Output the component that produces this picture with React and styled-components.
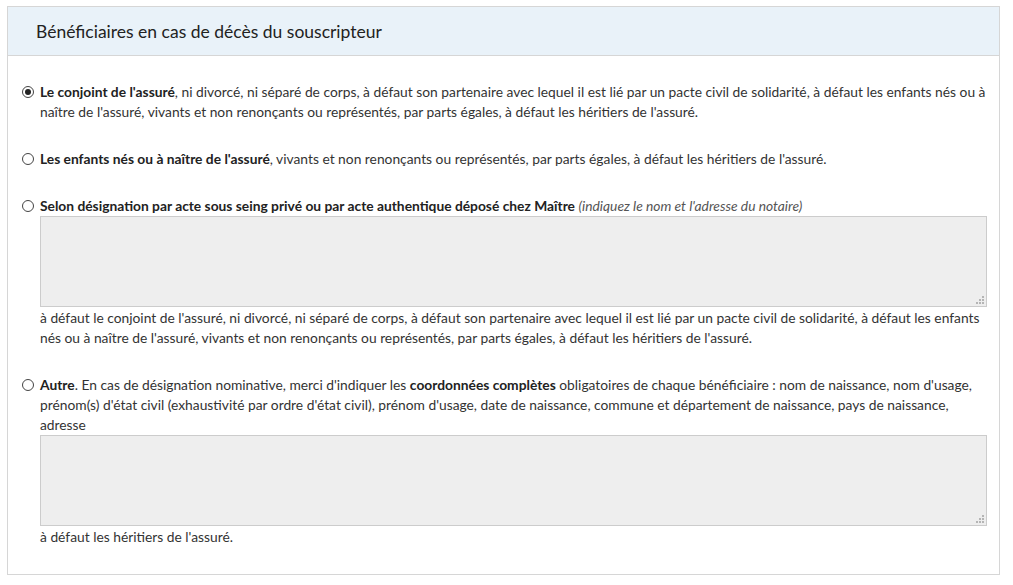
import styled, { createGlobalStyle } from "styled-components";

const GlobalStyle = createGlobalStyle`
  html, body {
    margin: 0;
    padding: 0;
    background: #fff;
  }
  body {
    font-family: Lato, "Open Sans", sans-serif;
    color: #333;
  }
`;

const Page = styled.div`
  padding: 6px 13px 10px 7px;
`;

const Panel = styled.section`
  border: 1px solid #d6d6d6;
  background: #fff;
`;

const PanelHeader = styled.header`
  background: #e9f2f9;
  border-bottom: 1px solid #d6d6d6;
  height: 48px;
  display: flex;
  align-items: center;
  padding-left: 28px;
`;

const PanelTitle = styled.h2`
  margin: 0;
  font-size: 17.5px;
  font-weight: 400;
  color: #222;
`;

const PanelBody = styled.div`
  padding: 26px 12px 27px 14px;
  display: flex;
  flex-direction: column;
  gap: 27px;
`;

const Option = styled.div`
  display: grid;
  grid-template-columns: 18px 1fr;
  font-size: 13.8px;
  line-height: 20px;
`;

const Radio = styled.span`
  width: 12px;
  height: 12px;
  margin-top: 4px;
  border-radius: 50%;
  border: 1px solid #444;
  box-sizing: border-box;
  display: flex;
  align-items: center;
  justify-content: center;
  background: #fff;

  &::after {
    content: "";
    width: 6px;
    height: 6px;
    border-radius: 50%;
    background: ${({ $checked }) => ($checked ? "#222" : "transparent")};
  }
`;

const Label = styled.div``;

const Strong = styled.b`
  font-weight: 700;
  color: #222;
`;

const Hint = styled.i`
  color: #555;
`;

const FieldWrap = styled.div`
  position: relative;
  margin-bottom: 1px;
`;

const Field = styled.textarea`
  display: block;
  width: 100%;
  height: 91px;
  margin: 0;
  box-sizing: border-box;
  background: #eeeeee;
  border: 1px solid #cccccc;
  resize: none;
  font: inherit;
`;

const Grip = styled.span`
  position: absolute;
  right: 3px;
  bottom: 3px;
  width: 8px;
  height: 8px;
  pointer-events: none;
  background:
    linear-gradient(#b5b5b5, #b5b5b5) 6px 0 / 2px 2px no-repeat,
    linear-gradient(#b5b5b5, #b5b5b5) 3px 3px / 2px 2px no-repeat,
    linear-gradient(#b5b5b5, #b5b5b5) 6px 3px / 2px 2px no-repeat,
    linear-gradient(#b5b5b5, #b5b5b5) 0 6px / 2px 2px no-repeat,
    linear-gradient(#b5b5b5, #b5b5b5) 3px 6px / 2px 2px no-repeat,
    linear-gradient(#b5b5b5, #b5b5b5) 6px 6px / 2px 2px no-repeat;
`;

const After = styled.div``;

const TextField = () => (
  <FieldWrap>
    <Field />
    <Grip />
  </FieldWrap>
);

export default function App() {
  return (
    <>
      <GlobalStyle />
      <Page>
        <Panel>
          <PanelHeader>
            <PanelTitle>Bénéficiaires en cas de décès du souscripteur</PanelTitle>
          </PanelHeader>
          <PanelBody>
            <Option>
              <Radio $checked />
              <Label>
                <Strong>Le conjoint de l'assuré</Strong>, ni divorcé, ni séparé de corps, à défaut son partenaire avec lequel il est lié par un pacte civil de solidarité, à défaut les enfants nés ou à naître de l'assuré, vivants et non renonçants ou représentés, par parts égales, à défaut les héritiers de l'assuré.
              </Label>
            </Option>
            <Option>
              <Radio />
              <Label>
                <Strong>Les enfants nés ou à naître de l'assuré</Strong>, vivants et non renonçants ou représentés, par parts égales, à défaut les héritiers de l'assuré.
              </Label>
            </Option>
            <Option>
              <Radio />
              <div>
                <Label>
                  <Strong>Selon désignation par acte sous seing privé ou par acte authentique déposé chez Maître</Strong>{" "}
                  <Hint>(indiquez le nom et l'adresse du notaire)</Hint>
                </Label>
                <TextField />
                <After>
                  à défaut le conjoint de l'assuré, ni divorcé, ni séparé de corps, à défaut son partenaire avec lequel il est lié par un pacte civil de solidarité, à défaut les enfants nés ou à naître de l'assuré, vivants et non renonçants ou représentés, par parts égales, à défaut les héritiers de l'assuré.
                </After>
              </div>
            </Option>
            <Option>
              <Radio />
              <div>
                <Label>
                  <Strong>Autre</Strong>. En cas de désignation nominative, merci d'indiquer les <Strong>coordonnées complètes</Strong> obligatoires de chaque bénéficiaire : nom de naissance, nom d'usage, prénom(s) d'état civil (exhaustivité par ordre d'état civil), prénom d'usage, date de naissance, commune et département de naissance, pays de naissance, adresse
                </Label>
                <TextField />
                <After>à défaut les héritiers de l'assuré.</After>
              </div>
            </Option>
          </PanelBody>
        </Panel>
      </Page>
    </>
  );
}
